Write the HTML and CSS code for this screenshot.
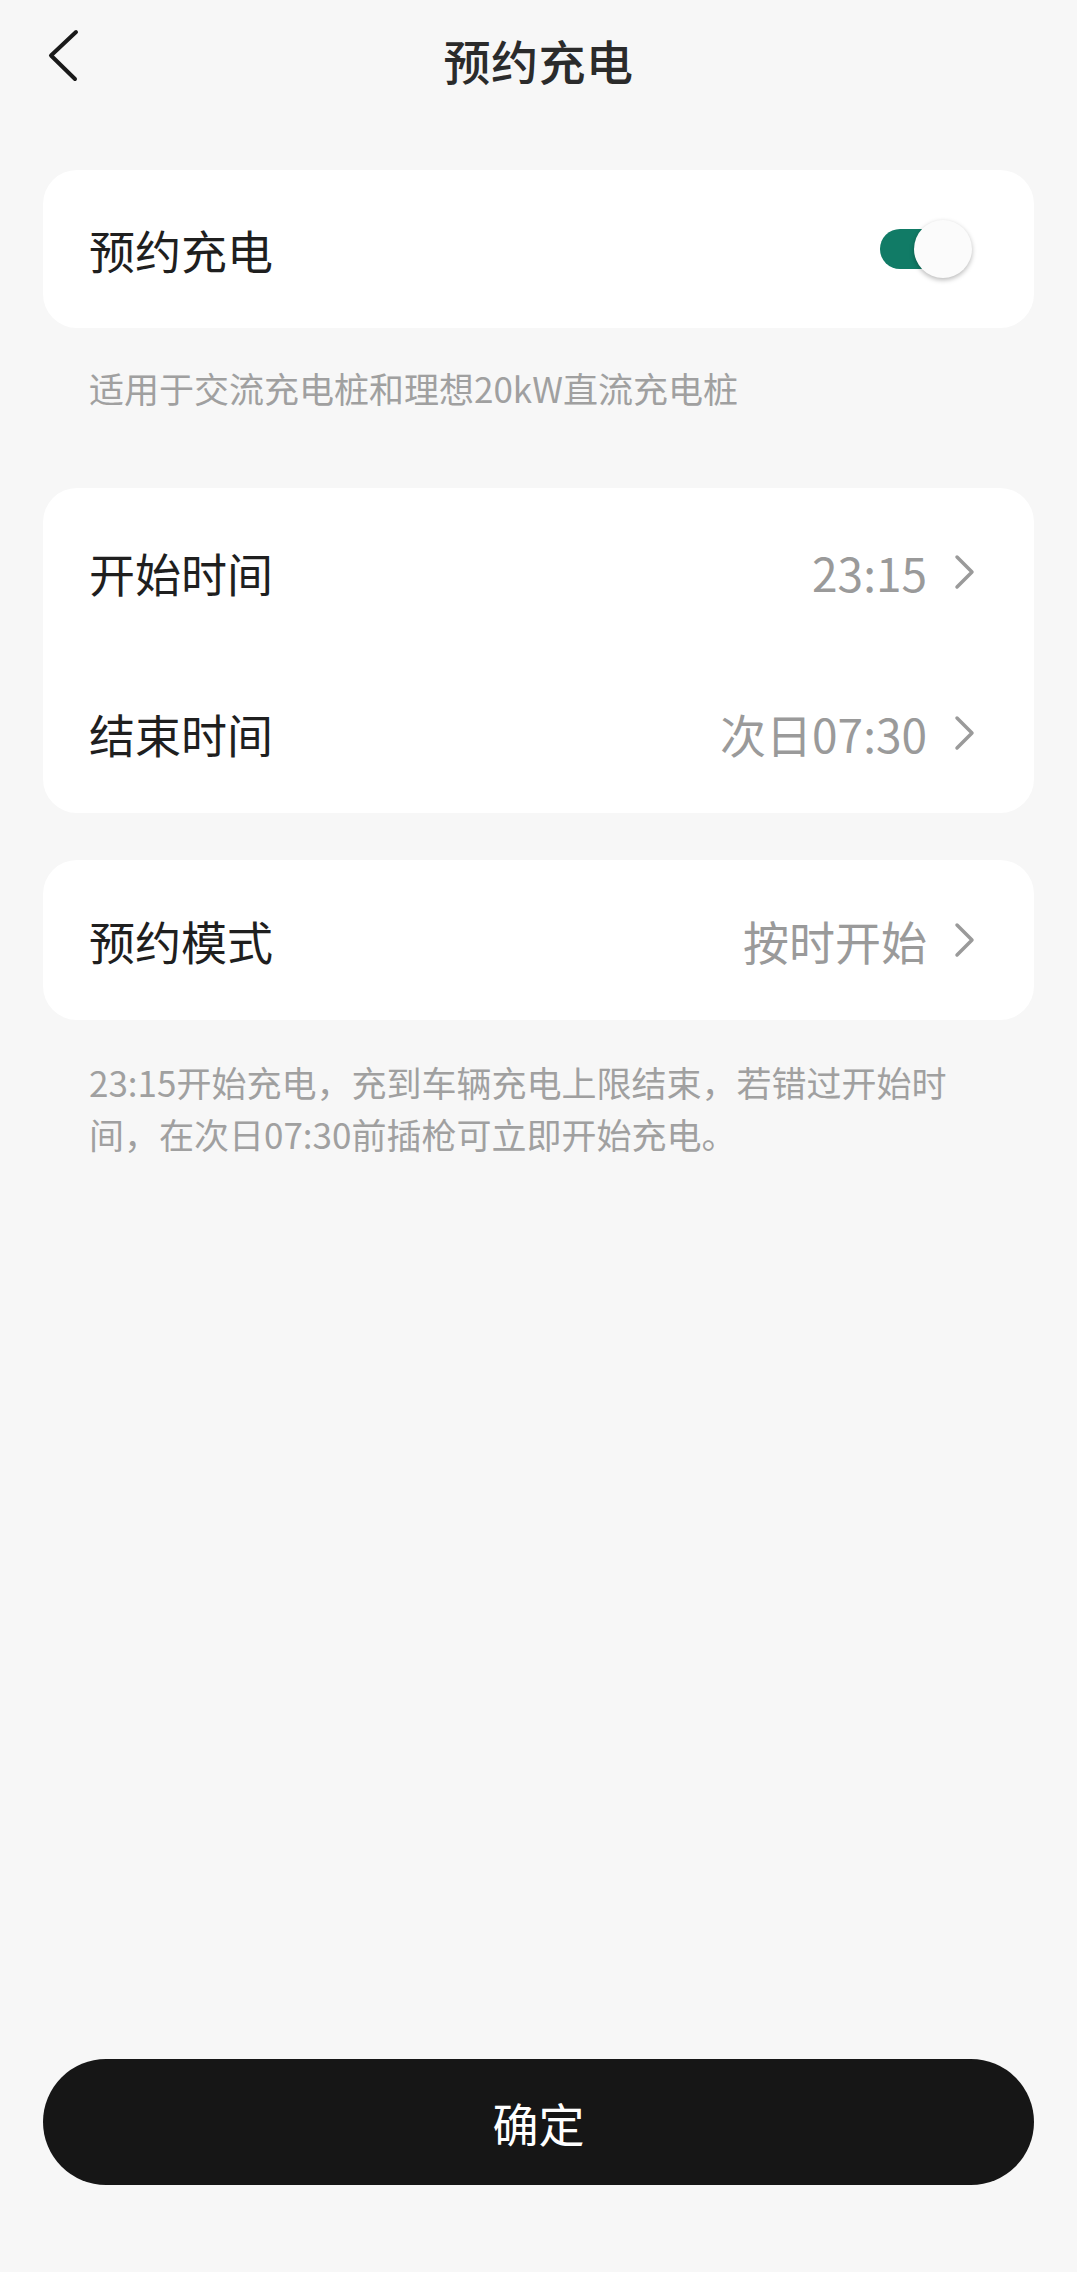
FILE: index.html
```html
<!DOCTYPE html>
<html lang="zh-CN">
<head>
<meta charset="utf-8">
<title>预约充电</title>
<link rel="stylesheet" href="styles.css">
</head>
<body>
<div class="page">
  <header class="header">
    <svg class="back" width="34" height="56" viewBox="0 0 34 56" aria-hidden="true">
      <path d="M30 4 L5 27.5 L29 51" fill="none" stroke="#1a1a1a" stroke-width="4" stroke-linecap="round" stroke-linejoin="round"/>
    </svg>
    <h1 class="title">预约充电</h1>
    <span class="spacer"></span>
  </header>

  <section class="card card-single">
    <div class="row">
      <span class="label">预约充电</span>
      <span class="switch">
        <span class="track"></span>
        <span class="knob"></span>
      </span>
    </div>
  </section>
  <p class="hint hint-first">适用于交流充电桩和理想20kW直流充电桩</p>

  <section class="card card-double">
    <div class="row row-link">
      <span class="label">开始时间</span>
      <span class="value">23:15</span>
      <svg class="chev" width="24" height="36" viewBox="0 0 24 36" aria-hidden="true"><path d="M5 3 L20 18 L5 33" fill="none" stroke="#9a9a9a" stroke-width="3.5" stroke-linecap="round" stroke-linejoin="round"/></svg>
    </div>
    <div class="row row-link">
      <span class="label">结束时间</span>
      <span class="value">次日07:30</span>
      <svg class="chev" width="24" height="36" viewBox="0 0 24 36" aria-hidden="true"><path d="M5 3 L20 18 L5 33" fill="none" stroke="#9a9a9a" stroke-width="3.5" stroke-linecap="round" stroke-linejoin="round"/></svg>
    </div>
  </section>

  <section class="card card-single card-mode">
    <div class="row row-link">
      <span class="label">预约模式</span>
      <span class="value">按时开始</span>
      <svg class="chev" width="24" height="36" viewBox="0 0 24 36" aria-hidden="true"><path d="M5 3 L20 18 L5 33" fill="none" stroke="#9a9a9a" stroke-width="3.5" stroke-linecap="round" stroke-linejoin="round"/></svg>
    </div>
  </section>
  <p class="hint hint-note">23:15开始充电，充到车辆充电上限结束，若错过开始时<br>间，在次日07:30前插枪可立即开始充电。</p>

  <button class="confirm" type="button">确定</button>
</div>
</body>
</html>
```

FILE: styles.css
```css
* {
  box-sizing: border-box;
}

html, body {
  margin: 0;
  padding: 0;
  background: #f7f7f7;
}

body {
  font-family: "Noto Sans CJK SC", "Noto Sans", sans-serif;
  color: #1f1f1f;
}

.page {
  display: flex;
  flex-direction: column;
  min-height: 2272px;
  width: 1077px;
}

.header {
  display: grid;
  grid-template-columns: 1fr auto 1fr;
  align-items: center;
  height: 124px;
  padding: 0 46px;
}

.back {
  display: block;
  align-self: start;
  margin-top: 28px;
}

.title {
  margin: 0 0 6px;
  font-size: 47px;
  font-weight: 500;
  line-height: 1;
  color: #2b2b2b;
  letter-spacing: 0.5px;
}

.card {
  margin: 0 43px;
  background: #ffffff;
  border-radius: 34px;
}

.card-single {
  margin-top: 46px;
  height: 158px;
  display: flex;
  flex-direction: column;
  justify-content: center;
}

.card-mode {
  margin-top: 47px;
  height: 160px;
}

.card-double {
  margin-top: 74px;
  padding-top: 4px;
  height: 325px;
  display: flex;
  flex-direction: column;
}

.card-double .row {
  height: 161px;
}

.row {
  display: flex;
  align-items: center;
  padding: 0 58px 0 46px;
  height: 100%;
}

.label {
  flex: 1;
  font-size: 46px;
  line-height: 1;
  color: #1f1f1f;
}

.value {
  font-size: 46px;
  line-height: 1;
  color: #9a9a9a;
  margin-right: 25px;
}

.chev {
  display: block;
  flex: none;
}

.switch {
  position: relative;
  display: block;
  width: 92px;
  height: 58px;
  margin-right: 4px;
}

.track {
  position: absolute;
  left: 0;
  top: 9px;
  width: 88px;
  height: 40px;
  border-radius: 20px;
  background: #117b66;
}

.knob {
  position: absolute;
  right: 0;
  top: 0;
  width: 58px;
  height: 58px;
  border-radius: 50%;
  background: #fbfbfb;
  box-shadow: 0 2px 5px rgba(0, 0, 0, 0.28);
}

.hint {
  margin: 0;
  padding: 0 46px 0 89px;
  font-size: 35px;
  line-height: 52px;
  color: #a0a0a0;
}

.hint-first {
  margin-top: 34px;
}

.hint-note {
  margin-top: 36px;
}

.confirm {
  margin: auto 43px 87px;
  height: 126px;
  border: none;
  border-radius: 63px;
  background: #161616;
  color: #ffffff;
  font-family: "Noto Sans CJK SC", "Noto Sans", sans-serif;
  font-size: 46px;
  font-weight: 400;
  line-height: 1;
  padding: 0;
}
```
